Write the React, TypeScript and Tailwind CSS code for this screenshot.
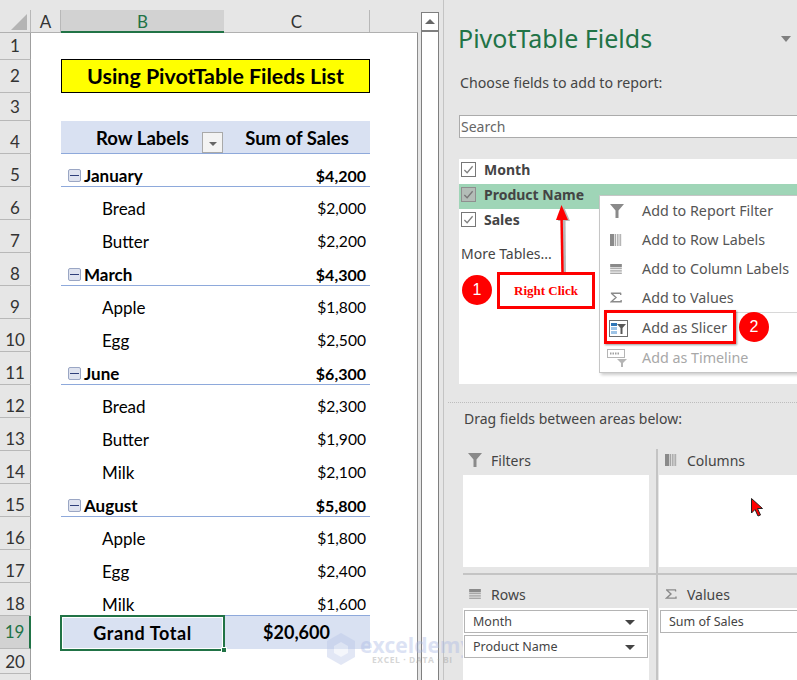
const cellFont = { fontFamily: '"Lato", sans-serif' };

type Row = {
  n: number;
  h: string;
  kind?: "title" | "head" | "group" | "item" | "total";
  label?: string;
  value?: string;
};

const rows: Row[] = [
  { n: 1, h: "h-[27px]" },
  { n: 2, h: "h-[33px]", kind: "title" },
  { n: 3, h: "h-[28px]" },
  { n: 4, h: "h-[33px]", kind: "head" },
  { n: 5, h: "h-[33px]", kind: "group", label: "January", value: "$4,200" },
  { n: 6, h: "h-[33px]", kind: "item", label: "Bread", value: "$2,000" },
  { n: 7, h: "h-[33px]", kind: "item", label: "Butter", value: "$2,200" },
  { n: 8, h: "h-[33px]", kind: "group", label: "March", value: "$4,300" },
  { n: 9, h: "h-[33px]", kind: "item", label: "Apple", value: "$1,800" },
  { n: 10, h: "h-[33px]", kind: "item", label: "Egg", value: "$2,500" },
  { n: 11, h: "h-[33px]", kind: "group", label: "June", value: "$6,300" },
  { n: 12, h: "h-[33px]", kind: "item", label: "Bread", value: "$2,300" },
  { n: 13, h: "h-[33px]", kind: "item", label: "Butter", value: "$1,900" },
  { n: 14, h: "h-[33px]", kind: "item", label: "Milk", value: "$2,100" },
  { n: 15, h: "h-[33px]", kind: "group", label: "August", value: "$5,800" },
  { n: 16, h: "h-[33px]", kind: "item", label: "Apple", value: "$1,800" },
  { n: 17, h: "h-[33px]", kind: "item", label: "Egg", value: "$2,400" },
  { n: 18, h: "h-[33px]", kind: "item", label: "Milk", value: "$1,600" },
  { n: 19, h: "h-[33px]", kind: "total", label: "Grand Total", value: "$20,600" },
  { n: 20, h: "h-[25px]" },
];

function FunnelIcon({ className }: { className?: string }) {
  return (
    <svg viewBox="0 0 14 14" className={className}>
      <path d="M0 0h14L8.5 6.5V14h-3V6.5z" fill="#8a8a8a" />
    </svg>
  );
}

function ColumnsIcon({ className }: { className?: string }) {
  return (
    <svg viewBox="0 0 14 14" className={className}>
      <rect x="0" y="0" width="5" height="14" fill="#8a8a8a" />
      <rect x="6" y="0" width="1" height="14" fill="#9a9a9a" />
      <rect x="8" y="0" width="1" height="14" fill="#9a9a9a" />
      <rect x="10" y="0" width="1" height="14" fill="#9a9a9a" />
      <rect x="12" y="0" width="1" height="14" fill="#9a9a9a" />
    </svg>
  );
}

function RowsIcon({ className }: { className?: string }) {
  return (
    <svg viewBox="0 0 14 12" className={className}>
      <rect x="0" y="0" width="14" height="4" fill="#8a8a8a" />
      <rect x="0" y="5" width="14" height="1" fill="#9a9a9a" />
      <rect x="0" y="7" width="14" height="1" fill="#9a9a9a" />
      <rect x="0" y="9" width="14" height="1" fill="#9a9a9a" />
      <rect x="0" y="11" width="14" height="1" fill="#9a9a9a" />
    </svg>
  );
}

function SigmaIcon({ className }: { className?: string }) {
  return (
    <svg viewBox="0 0 14 12" className={className}>
      <path d="M1 1h12M12.5 1v2M1.5 1L7 6 1.5 11H13v-2" fill="none" stroke="#8a8a8a" strokeWidth="1.6" />
    </svg>
  );
}

function SlicerIcon() {
  return (
    <svg viewBox="0 0 19 17" className="w-[19px] h-[17px]">
      <rect x="0.5" y="0.5" width="18" height="16" fill="#fff" stroke="#6d6d6d" />
      <rect x="2" y="3" width="6" height="3" fill="#2e75b6" />
      <rect x="2" y="7" width="6" height="3" fill="#9dc3e6" />
      <rect x="2" y="11" width="6" height="3" fill="#9dc3e6" />
      <path d="M8 4h9l-3.5 4v6h-2V8z" fill="#595959" />
    </svg>
  );
}

function TimelineIcon() {
  return (
    <svg viewBox="0 0 21 18" className="w-[21px] h-[18px]">
      <rect x="0.5" y="0.5" width="17" height="8" fill="#fff" stroke="#b5b5b5" />
      <path d="M3 4.5h9" stroke="#a0a0a0" strokeWidth="2" strokeDasharray="1.5 1" />
      <path d="M10 10h10l-4 4v4h-2v-4z" fill="#b5b5b5" />
    </svg>
  );
}

function SheetRow({ row }: { row: Row }) {
  const selected = row.kind === "total";
  const tall = row.n >= 4 && row.n <= 18;
  return (
    <div className={`flex shrink-0 ${row.h}`}>
      <div
        className={`w-[31px] shrink-0 flex items-center justify-center border-b border-[#b8b8b8] text-[17px] ${
          selected
            ? "bg-[#d2d2d2] border-r-2 border-r-[#217346] text-[#217346]"
            : "bg-[#e6e6e6] border-r border-r-[#9f9f9f] text-[#333]"
        } ${tall ? "pt-[10px]" : ""} ${row.n === 20 ? "pt-[2px]" : ""}`}
      >
        {row.n}
      </div>
      <div className="w-[30px] shrink-0" />
      <RowCells row={row} />
    </div>
  );
}

function RowCells({ row }: { row: Row }) {
  if (row.kind === "title") {
    return (
      <div className="w-[309px] h-[34px] -mt-px flex items-center justify-center bg-[#ffff00] border border-black text-[21.4px] font-bold text-black">
        Using PivotTable Fileds List
      </div>
    );
  }
  if (row.kind === "head") {
    return (
      <div className="w-[309px] flex bg-[#d9e1f2] border-b border-[#8ea9db] text-[18.5px] font-bold text-black">
        <div className="relative w-[163px] flex items-center justify-center pt-[3px]">
          Row Labels
          <div className="absolute right-[1px] top-[11px] w-[21px] h-[21px] flex items-center justify-center bg-[#f3f3f3] border border-[#a9a9a9]">
            <div className="mt-[3px] border-x-[4px] border-t-[4px] border-x-transparent border-t-[#666]" />
          </div>
        </div>
        <div className="w-[146px] flex items-center justify-center pt-[3px]">Sum of Sales</div>
      </div>
    );
  }
  if (row.kind === "group") {
    return (
      <div className="w-[309px] flex items-center justify-between border-b border-[#8ea9db] pl-[7px] pr-[4px] pt-[11px] text-[17px] font-bold text-black">
        <div className="flex items-center gap-[3px]">
          <div className="w-[13px] h-[13px] flex items-center justify-center rounded-[2px] bg-[#dfe3ef] border border-[#9aa6c4]">
            <div className="w-[9px] h-px bg-[#30407a]" />
          </div>
          {row.label}
        </div>
        <div className="text-[16px]">{row.value}</div>
      </div>
    );
  }
  if (row.kind === "item") {
    return (
      <div className="w-[309px] flex items-center justify-between pl-[41px] pr-[4px] pt-[11px] text-[17px] text-black">
        <div>{row.label}</div>
        <div className="text-[15.6px]">{row.value}</div>
      </div>
    );
  }
  if (row.kind === "total") {
    return (
      <div className="w-[309px] h-[34px] -mt-px flex bg-[#d9e1f2] border-t border-[#8ea9db] text-[18px] font-bold text-black">
        <div className="relative -ml-px -mt-px w-[165px] -mr-px flex items-center justify-center border-2 border-[#217346] shadow-[inset_0_0_0_1px_#fff] h-[36px] tracking-[0.6px]">
          {row.label}
          <div className="absolute -right-[4px] -bottom-[4px] w-[6px] h-[6px] bg-[#217346] border border-white" />
        </div>
        <div className="w-[145px] flex items-center justify-center">{row.value}</div>
      </div>
    );
  }
  return null;
}

function Sheet() {
  return (
    <div className="w-[418px] shrink-0 flex flex-col pt-[10px] bg-[#e6e6e6]" style={cellFont}>
      <div className="flex h-[23px] shrink-0 border-b border-[#b0b0b0] text-[17px] text-[#333]">
        <div className="relative w-[31px] border-r border-[#b8b8b8]">
          <div className="absolute right-[3px] bottom-[2px] w-0 h-0 border-l-[16px] border-b-[16px] border-l-transparent border-b-[#b4b4b4]" />
        </div>
        <div className="w-[30px] flex items-center justify-center border-r border-[#b8b8b8] pt-[2px]">A</div>
        <div className="w-[163px] -mb-px flex items-center justify-center bg-[#d2d2d2] border-b-2 border-[#217346] text-[#217346] pt-[2px]">
          B
        </div>
        <div className="w-[146px] flex items-center justify-center border-r border-[#b8b8b8] pt-[2px]">C</div>
        <div className="flex-1" />
      </div>
      <div className="flex-1 flex flex-col overflow-hidden bg-white border-r border-[#8c8c8c]">
        {rows.map((row) => (
          <SheetRow key={row.n} row={row} />
        ))}
        <div className="w-[31px] flex-1 bg-[#e6e6e6] border-r border-[#9f9f9f]" />
      </div>
    </div>
  );
}

function Scrollbar() {
  return (
    <div className="ml-[3px] w-[18px] shrink-0 mt-[12px] flex flex-col bg-white border-x border-[#7f7f7f] border-t">
      <div className="h-[19px] flex items-center justify-center border-b-2 border-[#7f7f7f]">
        <div className="border-x-[5px] border-b-[5px] border-x-transparent border-b-[#666]" />
      </div>
    </div>
  );
}

function FieldRow({ label, active }: { label: string; active?: boolean }) {
  return (
    <div className={`h-[25px] flex items-center pl-[2px] pb-[5px] gap-[8px] ${active ? "bg-[#9fd5b7]" : ""}`}>
      <div
        className={`w-[15px] h-[15px] flex items-center justify-center border ${
          active ? "bg-[#b3bdb7] border-[#8f8f8f]" : "bg-white border-[#777]"
        }`}
      >
        <svg viewBox="0 0 12 12" className="w-[11px] h-[11px]">
          <path d="M1.5 6.5L4.5 9.5 10.5 2.5" fill="none" stroke={active ? "#777" : "#808080"} strokeWidth="1.4" />
        </svg>
      </div>
      <span className="text-[14px] font-bold text-[#444]">{label}</span>
    </div>
  );
}

function AreaField({ label, className }: { label: string; className?: string }) {
  return (
    <div
      className={`h-[23px] shrink-0 flex items-center justify-between bg-white border border-[#b4b4b4] pl-[8px] pr-[12px] pt-px text-[12.5px] text-[#444] ${className ?? ""}`}
    >
      {label}
      <div className="border-x-[5px] border-t-[5px] border-x-transparent border-t-[#444]" />
    </div>
  );
}

function Pane() {
  return (
    <div
      className="flex-1 ml-[4px] border-l border-[#c4c4c4] flex flex-col pl-[15px] min-w-0 text-[#444]"
      style={{ fontFamily: '"Noto Sans", sans-serif' }}
    >
      <div className="h-[74px] shrink-0 flex items-end justify-between pb-[20px] pr-[6px]">
        <span className="-ml-px text-[25px] leading-[32px] text-[#217346]">PivotTable Fields</span>
        <div className="mb-[12px] border-x-[5px] border-t-[6px] border-x-transparent border-t-[#808080]" />
      </div>
      <div className="h-[41px] shrink-0 flex items-start text-[14.2px] leading-[18px] pl-px">
        Choose fields to add to report:
      </div>
      <div className="h-[23px] shrink-0 flex items-center bg-white border border-[#ababab] border-r-0 pl-px text-[14px] text-[#666]">
        Search
      </div>
      <div className="h-[225px] shrink-0 mt-[21px] bg-white">
        <FieldRow label="Month" />
        <FieldRow label="Product Name" active />
        <FieldRow label="Sales" />
        <div className="mt-[10px] pl-[2px] text-[14px] leading-[20px]">More Tables...</div>
      </div>
      <div className="h-[19px] shrink-0 border-b border-dotted border-[#bdbdbd] -ml-[11px]" />
      <div className="h-[46px] shrink-0 pt-[6px] pl-[5px] text-[14px] leading-[20px]">Drag fields between areas below:</div>
      <div className="flex-1 min-h-0 grid grid-cols-[195px_1fr] grid-rows-[126px_1fr] ml-[4px]">
        <div className="flex flex-col pr-[7px] border-r-2 border-[#c4c4c4] border-b-2 pb-[6px]">
          <AreaHeader icon={<FunnelIcon className="w-[14px] h-[14px]" />} label="Filters" />
          <div className="flex-1 bg-white" />
        </div>
        <div className="flex flex-col pl-[1px] border-b-2 border-[#c4c4c4] pb-[6px]">
          <AreaHeader icon={<ColumnsIcon className="w-[12px] h-[12px]" />} label="Columns" />
          <div className="flex-1 bg-white" />
        </div>
        <div className="flex flex-col pr-[7px] border-r-2 border-[#c4c4c4] pt-[5px]">
          <AreaHeader icon={<RowsIcon className="w-[12px] h-[10px]" />} label="Rows" small />
          <div className="relative z-10 flex-1 bg-white p-[1px] pt-[2px] flex flex-col gap-[2px]">
            <AreaField label="Month" />
            <AreaField label="Product Name" />
          </div>
        </div>
        <div className="flex flex-col pl-[1px] pt-[5px] overflow-hidden">
          <AreaHeader icon={<SigmaIcon className="w-[12px] h-[10px]" />} label="Values" small />
          <div className="relative z-10 flex-1 bg-white p-[1px] pt-[2px]">
            <AreaField label="Sum of Sales" className="w-[184px]" />
          </div>
        </div>
      </div>
    </div>
  );
}

function AreaHeader({ icon, label, small }: { icon: React.ReactNode; label: string; small?: boolean }) {
  return (
    <div
      className={`${small ? "h-[28px]" : "h-[26px] pb-[4px]"} shrink-0 flex items-center gap-[9px] pl-[5px] text-[14px]`}
    >
      <div className="w-[14px] flex justify-center">{icon}</div>
      {label}
    </div>
  );
}

function ContextMenu() {
  const items = [
    { icon: <FunnelIcon className="w-[14px] h-[14px]" />, label: "Add to Report Filter", h: "h-[29px]" },
    { icon: <ColumnsIcon className="w-[12px] h-[12px]" />, label: "Add to Row Labels", h: "h-[29px]" },
    { icon: <RowsIcon className="w-[12px] h-[10px]" />, label: "Add to Column Labels", h: "h-[29px]" },
    { icon: <SigmaIcon className="w-[12px] h-[11px]" />, label: "Add to Values", h: "h-[29px]" },
  ];
  return (
    <div
      className="absolute left-[599px] top-[195px] w-[200px] h-[178px] bg-white border border-[#c6c6c6] shadow-[2px_2px_3px_rgba(0,0,0,0.2)] text-[14.3px] text-[#555]"
      style={{ fontFamily: '"Noto Sans", sans-serif' }}
    >
      {items.map((item) => (
        <div key={item.label} className={`${item.h} flex items-center`}>
          <div className="w-[42px] pl-[10px] flex justify-start">{item.icon}</div>
          {item.label}
        </div>
      ))}
      <div className="ml-[36px] border-t border-[#d8d8d8]" />
      <div className="h-[30px] flex items-center">
        <div className="w-[42px] pl-[9px]">
          <SlicerIcon />
        </div>
        Add as Slicer
      </div>
      <div className="h-[29px] flex items-center text-[#a8a8a8]">
        <div className="w-[42px] pl-[7px]">
          <TimelineIcon />
        </div>
        Add as Timeline
      </div>
    </div>
  );
}

function Badge({ n, className }: { n: number; className: string }) {
  return (
    <div
      className={`absolute w-[30px] h-[30px] rounded-full bg-[#ff0000] flex items-center justify-center text-white text-[16px] ${className}`}
      style={{ fontFamily: '"Liberation Sans", sans-serif' }}
    >
      {n}
    </div>
  );
}

function Annotations() {
  return (
    <>
      <svg className="absolute left-[545px] top-[200px] w-[35px] h-[76px]" viewBox="0 0 35 76">
        <path d="M17.5 73L17 14" stroke="#b8b8b8" strokeWidth="3" transform="translate(2 1)" />
        <path d="M11 20L17 6 23 20z" fill="#b8b8b8" transform="translate(2 1)" />
        <path d="M17.5 73L16.5 14" stroke="#ff0000" strokeWidth="2.5" />
        <path d="M11 20L16.5 5 23 20z" fill="#ff0000" />
      </svg>
      <div
        className="absolute left-[497px] top-[272px] w-[98px] h-[37px] flex items-center justify-center bg-white border-[3px] border-[#ff0000] text-[#ff0000] text-[13px] font-bold"
        style={{ fontFamily: '"Liberation Serif", serif' }}
      >
        Right Click
      </div>
      <Badge n={1} className="left-[462px] top-[275px]" />
      <Badge n={2} className="left-[739px] top-[312px]" />
      <div className="absolute left-[604px] top-[310px] w-[132px] h-[34px] border-[3px] border-[#ff0000] shadow-[1px_1px_2px_rgba(0,0,0,0.4)]" />
      <svg className="absolute left-[750px] top-[497px] w-[14px] h-[21px]" viewBox="0 0 14 21">
        <path d="M1.5 1.5V16l3.5-3.5 3 6.5 2.5-1-3-6.5h5z" fill="#ff0000" stroke="#222" strokeWidth="1" />
      </svg>
    </>
  );
}

function Watermark() {
  return (
    <div
      className="absolute left-[327px] top-[633px] flex items-start gap-[5px] opacity-40 pointer-events-none"
      style={{ fontFamily: '"Open Sans", sans-serif' }}
    >
      <svg viewBox="0 0 28 32" className="w-[28px] h-[32px]">
        <path d="M14 0L28 8v16l-14 8L0 24V8z" fill="#b7c4e8" />
        <path d="M14 9l7 4v7l-7 4-7-4v-7z" fill="#e4e9f6" />
      </svg>
      <div className="flex flex-col">
        <span className="text-[21px] leading-[24px] font-bold text-[#a9b9e4]">exceldemy</span>
        <span className="-mt-[2px] pl-[12px] text-[8.5px] leading-[10px] tracking-[0.6px] font-bold text-[#9a9a9a]">
          EXCEL · DATA · BI
        </span>
      </div>
    </div>
  );
}

export default function App() {
  return (
    <div className="relative w-[797px] h-[680px] overflow-hidden flex bg-[#e6e6e6]">
      <Sheet />
      <Scrollbar />
      <Pane />
      <ContextMenu />
      <Annotations />
      <Watermark />
    </div>
  );
}
